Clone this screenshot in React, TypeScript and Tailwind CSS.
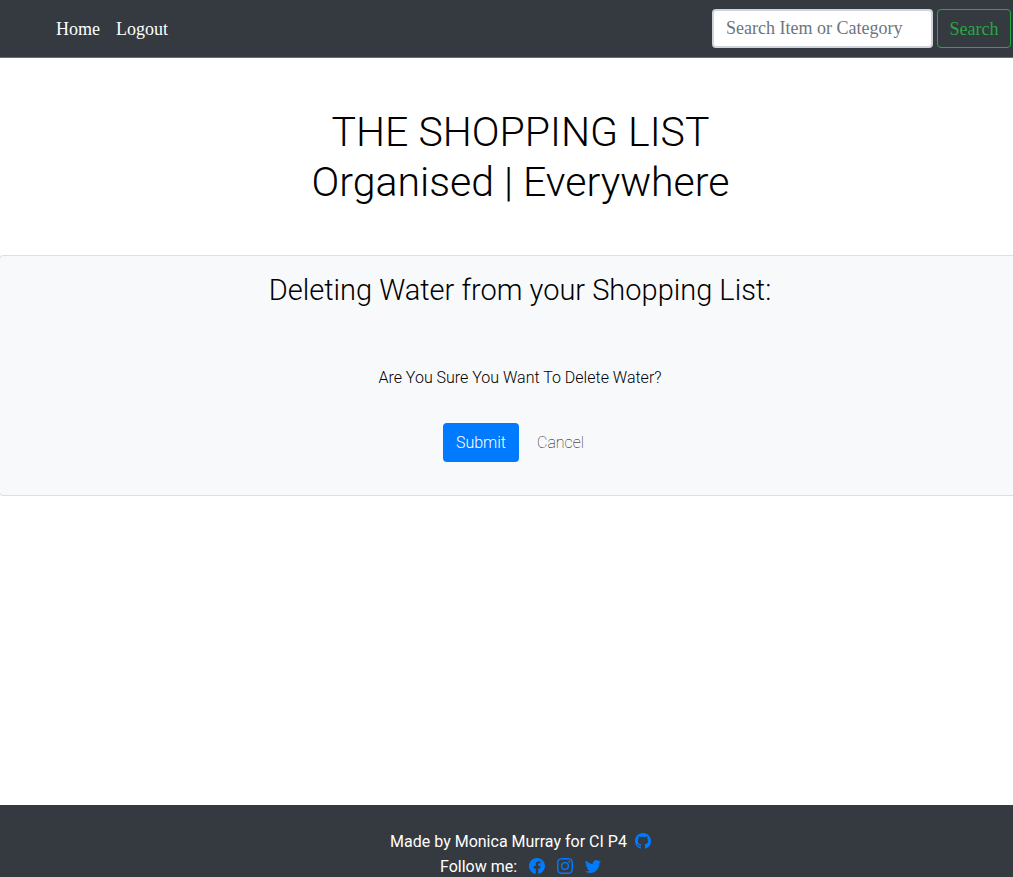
import React from "react";
import { BsFacebook, BsGithub, BsInstagram, BsTwitter } from "react-icons/bs";

const socialLinks = [
  { label: "Facebook", href: "#facebook", Icon: BsFacebook },
  { label: "Instagram", href: "#instagram", Icon: BsInstagram },
  { label: "Twitter", href: "#twitter", Icon: BsTwitter },
];

function NavBar() {
  return (
    <header className="flex items-center justify-between border-b border-[#6b6c72] bg-[#343a40] py-[9px] pr-0.5 pl-12 font-['Liberation_Serif',serif] text-lg leading-6">
      <nav className="flex">
        <a href="#home" className="px-2 text-white">Home</a>
        <a href="#logout" className="px-2 text-white">Logout</a>
      </nav>
      <form className="flex gap-1" onSubmit={(e) => e.preventDefault()}>
        <input
          type="search"
          aria-label="Search Item or Category"
          placeholder="Search Item or Category"
          className="h-[39px] w-[221px] rounded border-2 border-[#ced4da] bg-white px-3 text-[#495057] placeholder:text-[#6c757d]"
        />
        <button type="submit" className="h-[39px] w-[74px] rounded border border-[#28a745] text-[#28a745]">
          Search
        </button>
      </form>
    </header>
  );
}

function DeleteCard() {
  return (
    <section className="-mr-7 -ml-px flex flex-col items-center rounded border border-[#dfdfdf] bg-[#f8f9fb] pt-4 pb-[33px]">
      <h2 className="text-[29px] leading-9 font-light">Deleting Water from your Shopping List:</h2>
      <p className="mt-[58px] text-base leading-6 font-light">Are You Sure You Want To Delete Water?</p>
      <form className="mt-[33px] flex items-center gap-[5px]" onSubmit={(e) => e.preventDefault()}>
        <button type="submit" className="h-[39px] rounded bg-[#007bff] px-[13px] font-light text-white">
          Submit
        </button>
        <a href="#home" className="px-[13px] font-thin">Cancel</a>
      </form>
    </section>
  );
}

function Footer() {
  return (
    <footer className="flex h-[72px] flex-col items-center bg-[#343a40] pt-6 pl-7 leading-[25px] text-white">
      <p className="flex items-center gap-2">
        Made by Monica Murray for CI P4
        <a href="#github" aria-label="GitHub" className="pb-px text-[#007bff]"><BsGithub /></a>
      </p>
      <div className="flex items-center gap-3">
        <span>Follow me:</span>
        {socialLinks.map(({ label, href, Icon }) => (
          <a key={label} href={href} aria-label={label} className="pb-px text-[#007bff]"><Icon /></a>
        ))}
      </div>
    </footer>
  );
}

export default function App() {
  return (
    <div className="flex min-h-screen flex-col overflow-hidden bg-white font-[Roboto,sans-serif] text-base text-black">
      <NavBar />
      <main className="flex-1">
        <h1 className="pt-[49px] pb-12 pl-7 text-center text-[41px] leading-[50px] font-light">
          THE SHOPPING LIST
          <br />
          Organised | Everywhere
        </h1>
        <DeleteCard />
      </main>
      <Footer />
    </div>
  );
}
